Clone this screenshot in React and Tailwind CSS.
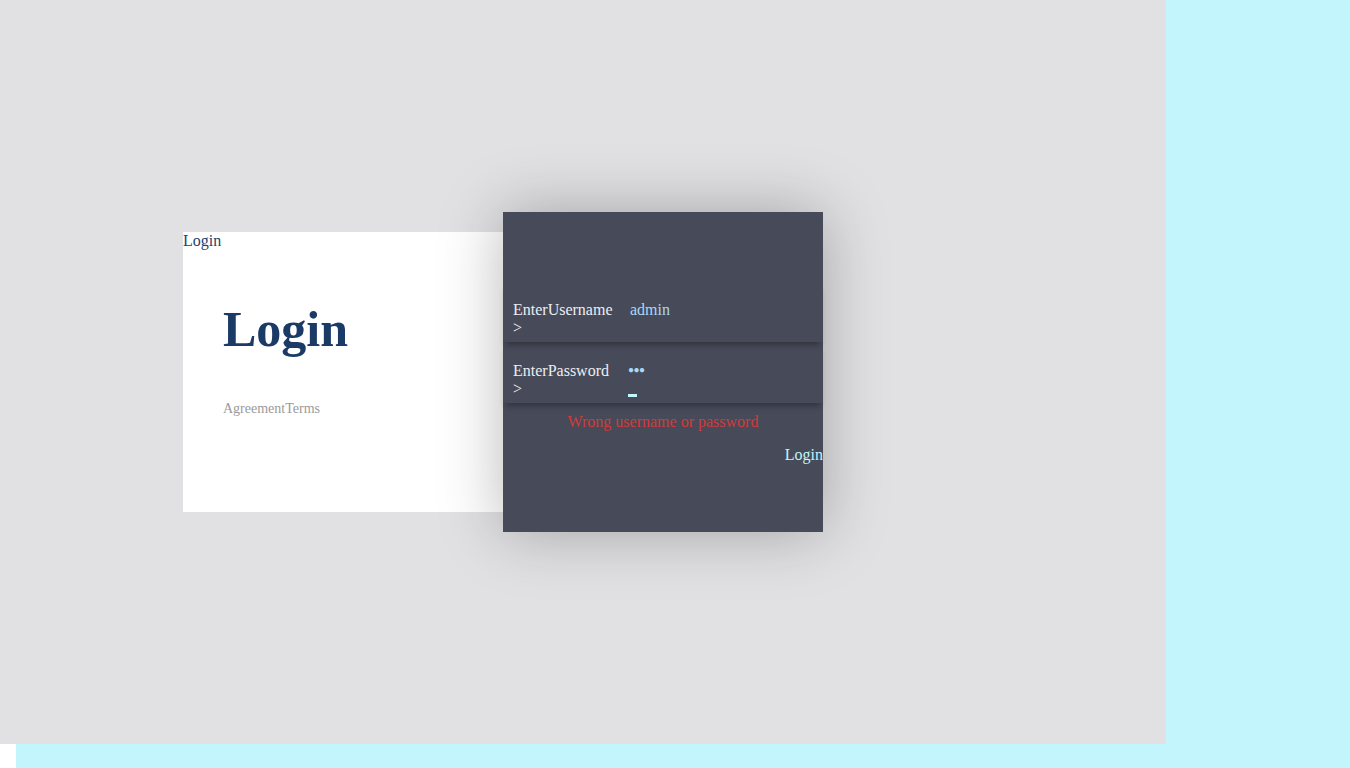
export default function App() {
  return (
    <div className="grid h-[768px] w-[1350px] grid-cols-[16px_1150px_184px] grid-rows-[744px_24px] bg-white font-['Liberation_Serif',serif] text-base">
      <main className="col-span-2 flex items-center bg-[#e1e1e3] pl-[183px]">
        <section className="relative z-0 flex h-[280px] w-[320px] flex-col bg-white">
          <a className="self-start leading-[18px] text-[#23426e]">Login</a>
          <h1 className="mt-[49px] pl-[40px] text-[50px] font-bold leading-[60px] text-[#1b3a66]">Login</h1>
          <p className="mt-[40px] pl-[40px] text-sm text-[#9a9a9a]">AgreementTerms</p>
        </section>
        <section className="relative z-10 flex h-[320px] w-[320px] flex-col bg-[#474a59] pt-[69px] shadow-[0_0_60px_rgba(0,0,0,0.28)]">
          <div className="relative z-10 flex h-[61px] items-end bg-[#474a59] px-[10px] pb-[5px] shadow-[0_6px_6px_-3px_rgba(0,0,0,0.3)]">
            <div className="flex items-start">
              <label className="mr-[12px] w-[105px] leading-[18px] text-[#eceef2]">EnterUsername &gt;</label>
              <span className="leading-[18px] text-[#a9d8f7]">admin</span>
            </div>
          </div>
          <div className="flex h-[61px] items-end bg-[#474a59] px-[10px] pb-[5px] shadow-[0_6px_6px_-3px_rgba(0,0,0,0.3)]">
            <div className="flex h-[36px] items-stretch">
              <label className="mr-[10px] w-[105px] leading-[18px] text-[#eceef2]">EnterPassword &gt;</label>
              <div className="flex flex-col justify-between">
                <span className="mt-[3px] text-[10px] leading-[10px] tracking-[-0.5px] text-[#a9d8f7]">●●●</span>
                <span className="mb-[1px] h-[3px] w-[9px] bg-[#c2f6fc]" />
              </div>
            </div>
          </div>
          <p className="mt-[9px] text-center leading-[19px] text-[#d23a3a]">Wrong username or password</p>
          <button className="mt-[15px] self-end leading-[18px] text-[#c2f6fc]">Login</button>
        </section>
      </main>
      <div className="bg-[#c2f6fc]" />
      <div className="bg-white" />
      <div className="col-span-2 bg-[#c2f6fc]" />
    </div>
  );
}
